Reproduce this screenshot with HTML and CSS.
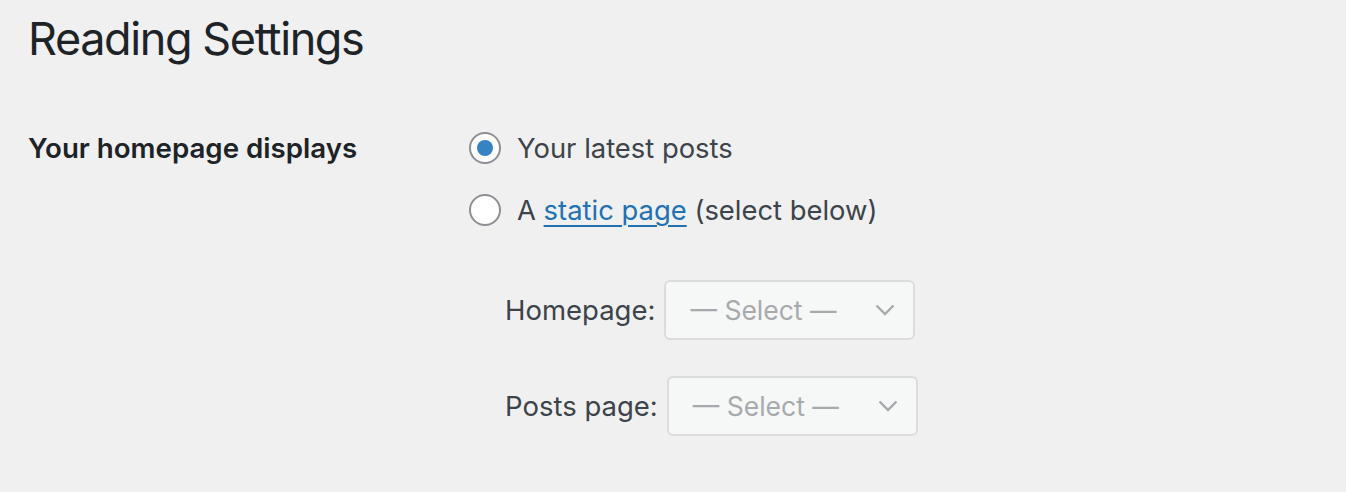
FILE: index.html
```html
<!DOCTYPE html>
<html lang="en">
<head>
<meta charset="utf-8">
<title>Reading Settings</title>
<link rel="stylesheet" href="styles.css">
</head>
<body>
<div class="wrap">
  <h1 class="title">Reading Settings</h1>
  <div class="form-row">
    <div class="row-label">Your homepage displays</div>
    <div class="row-field">
      <label class="radio-line">
        <span class="radio checked"></span>
        <span>Your latest posts</span>
      </label>
      <label class="radio-line">
        <span class="radio"></span>
        <span>A <a href="#" class="link">static page</a> (select below)</span>
      </label>
      <div class="page-selects">
        <div class="select-line">
          <span class="select-label">Homepage:</span>
          <span class="select">
            <span class="select-text">— Select —</span>
            <svg class="chev" width="20" height="12" viewBox="0 0 20 12"><path d="M1.5 1.5 L10 10 L18.5 1.5" fill="none" stroke="#a7aaad" stroke-width="2.4"/></svg>
          </span>
        </div>
        <div class="select-line">
          <span class="select-label">Posts page:</span>
          <span class="select">
            <span class="select-text">— Select —</span>
            <svg class="chev" width="20" height="12" viewBox="0 0 20 12"><path d="M1.5 1.5 L10 10 L18.5 1.5" fill="none" stroke="#a7aaad" stroke-width="2.4"/></svg>
          </span>
        </div>
      </div>
    </div>
  </div>
</div>
</body>
</html>
```
FILE: styles.css
```css
* { box-sizing: border-box; }
html, body { margin: 0; padding: 0; }
body {
  background: #f0f0f1;
  font-family: "Inter", "Helvetica Neue", "Liberation Sans", sans-serif;
  color: #3c434a;
  width: 1346px;
  height: 492px;
  overflow: hidden;
}
.wrap { padding: 0 0 0 28px; }
.title {
  margin: 0;
  padding-top: 10px;
  font-size: 45px;
  letter-spacing: -1.4px;
  font-weight: 400;
  line-height: 58px;
  color: #1d2327;
}
.form-row {
  display: flex;
  margin-top: 60px;
}
.row-label {
  width: 441px;
  flex: none;
  font-size: 27.7px;
  font-weight: 600;
  color: #1d2327;
  line-height: 40px;
}
.row-field { display: flex; flex-direction: column; }
.radio-line {
  display: flex;
  align-items: center;
  gap: 16px;
  font-size: 27.4px;
  line-height: 40px;
  height: 40px;
  margin-bottom: 22px;
}
.radio {
  width: 32px;
  height: 32px;
  border-radius: 50%;
  border: 2px solid #8c8f94;
  background: #fff;
  display: flex;
  align-items: center;
  justify-content: center;
}
.radio.checked::after {
  content: "";
  width: 16px;
  height: 16px;
  border-radius: 50%;
  background: #3582c4;
}
.link { color: #2271b1; text-decoration: underline; text-underline-offset: 5px; text-decoration-thickness: 2px; }
.page-selects {
  padding-left: 36px;
  margin-top: 28px;
  display: flex;
  flex-direction: column;
  gap: 36px;
}
.select-line { display: flex; align-items: center; gap: 9px; }
.select-label { font-size: 27.5px; }
.select {
  width: 251px;
  height: 60px;
  border: 2px solid #dcdcde;
  border-radius: 6px;
  background: #f6f7f7;
  display: flex;
  align-items: center;
  justify-content: space-between;
  padding: 0 18px 0 24px;
}
.select-text { font-size: 26.5px; color: #a7aaad; }
```
